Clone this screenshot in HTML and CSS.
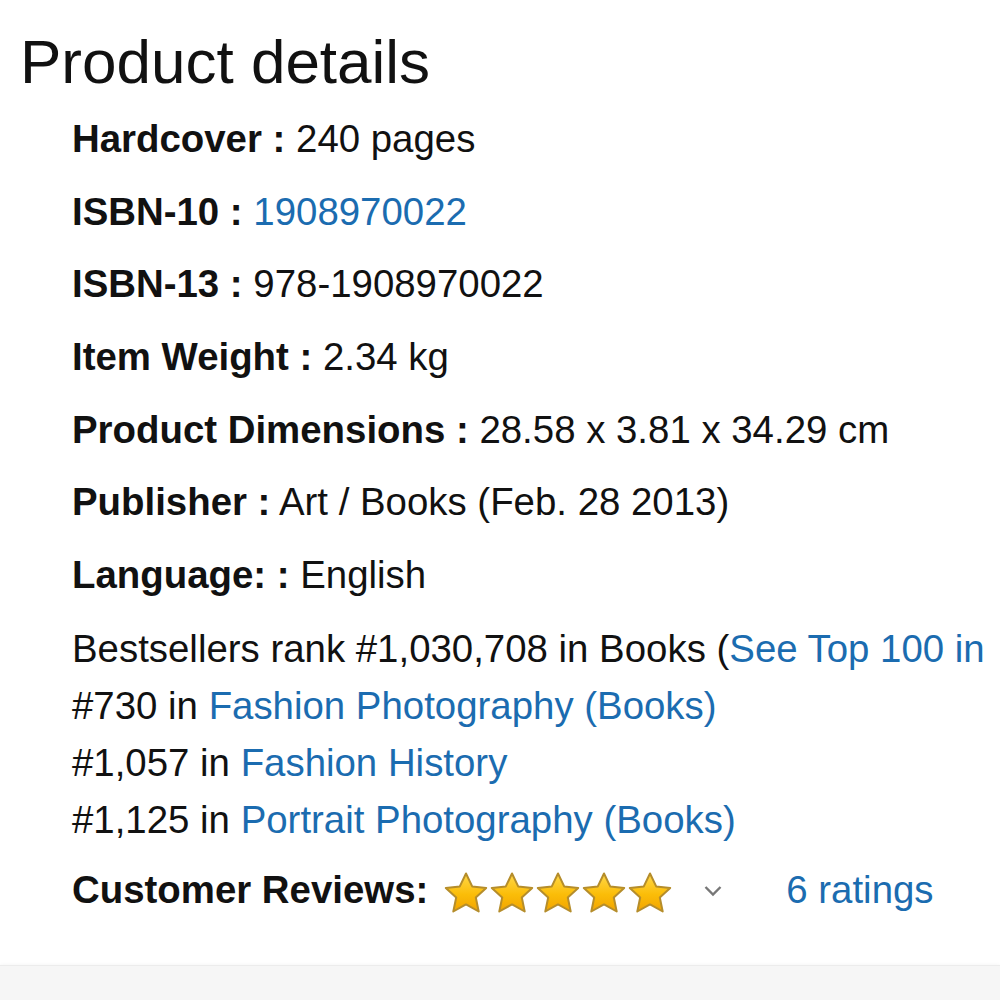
FILE: index.html
```html
<!DOCTYPE html>
<html lang="en">
<head>
<meta charset="utf-8">
<title>Product details</title>
<link rel="stylesheet" href="styles.css">
</head>
<body>
<div class="page">
  <h1 class="title">Product details</h1>
  <ul class="details">
    <li><b>Hardcover :</b> 240 pages</li>
    <li><b>ISBN-10 :</b> <a href="#">1908970022</a></li>
    <li><b>ISBN-13 :</b> 978-1908970022</li>
    <li><b>Item Weight :</b> 2.34 kg</li>
    <li><b>Product Dimensions :</b> 28.58 x 3.81 x 34.29 cm</li>
    <li><b>Publisher :</b> Art / Books (Feb. 28 2013)</li>
    <li><b>Language: :</b> English</li>
  </ul>
  <div class="ranks">
    <div class="rank-line">Bestsellers rank #1,030,708 in Books (<a href="#">See Top 100 in</a></div>
    <div class="rank-line">#730 in <a href="#">Fashion Photography (Books)</a></div>
    <div class="rank-line">#1,057 in <a href="#">Fashion History</a></div>
    <div class="rank-line">#1,125 in <a href="#">Portrait Photography (Books)</a></div>
  </div>
  <div class="reviews">
    <b>Customer Reviews:</b>
    <span class="stars">
      <svg class="star" viewBox="0 0 46 44" width="46" height="44"><defs><linearGradient id="sg" x1="0" y1="0" x2="0" y2="1"><stop offset="0" stop-color="#ffd84a"/><stop offset="0.55" stop-color="#fbbd08"/><stop offset="1" stop-color="#f2a400"/></linearGradient></defs><polygon points="23,2.5 29.2,15.4 43.2,16.9 32.8,26.5 35.7,40.5 23,33.4 10.3,40.5 13.2,26.5 2.8,16.9 16.8,15.4" fill="url(#sg)" stroke="#b58d2b" stroke-width="2" stroke-linejoin="round"/></svg>
      <svg class="star" viewBox="0 0 46 44" width="46" height="44"><polygon points="23,2.5 29.2,15.4 43.2,16.9 32.8,26.5 35.7,40.5 23,33.4 10.3,40.5 13.2,26.5 2.8,16.9 16.8,15.4" fill="url(#sg)" stroke="#b58d2b" stroke-width="2" stroke-linejoin="round"/></svg>
      <svg class="star" viewBox="0 0 46 44" width="46" height="44"><polygon points="23,2.5 29.2,15.4 43.2,16.9 32.8,26.5 35.7,40.5 23,33.4 10.3,40.5 13.2,26.5 2.8,16.9 16.8,15.4" fill="url(#sg)" stroke="#b58d2b" stroke-width="2" stroke-linejoin="round"/></svg>
      <svg class="star" viewBox="0 0 46 44" width="46" height="44"><polygon points="23,2.5 29.2,15.4 43.2,16.9 32.8,26.5 35.7,40.5 23,33.4 10.3,40.5 13.2,26.5 2.8,16.9 16.8,15.4" fill="url(#sg)" stroke="#b58d2b" stroke-width="2" stroke-linejoin="round"/></svg>
      <svg class="star" viewBox="0 0 46 44" width="46" height="44"><polygon points="23,2.5 29.2,15.4 43.2,16.9 32.8,26.5 35.7,40.5 23,33.4 10.3,40.5 13.2,26.5 2.8,16.9 16.8,15.4" fill="url(#sg)" stroke="#b58d2b" stroke-width="2" stroke-linejoin="round"/></svg>
    </span>
    <svg class="chevron" viewBox="0 0 20 12" width="20" height="12"><polyline points="2.5,2 10,9.5 17.5,2" fill="none" stroke="#777" stroke-width="2.4"/></svg>
    <a href="#" class="ratings">6 ratings</a>
  </div>
</div>
<div class="footer-band"></div>
</body>
</html>
```

FILE: styles.css
```css
html, body {
  margin: 0;
  padding: 0;
  background: #ffffff;
}
body {
  font-family: "Liberation Sans", Arial, sans-serif;
  color: #111111;
  width: 1000px;
  height: 1000px;
  overflow: hidden;
  position: relative;
}
a {
  color: #1b6cb0;
  text-decoration: none;
}
.page {
  padding-top: 26px;
}
.title {
  margin: 0 0 0 20px;
  font-size: 62px;
  font-weight: 400;
  line-height: normal;
  height: 77px;
}
.details {
  list-style: none;
  margin: 0;
  padding: 0 0 0 72px;
  font-size: 38.4px;
  line-height: 72.67px;
}
.details li {
  white-space: nowrap;
}
.details b {
  font-weight: 700;
}
.ranks {
  margin-top: 8px;
  padding-left: 72px;
  font-size: 38.4px;
  line-height: 57px;
  white-space: nowrap;
}
.reviews {
  margin-top: 6px;
  padding-left: 72px;
  font-size: 38.4px;
  line-height: 72.67px;
  height: 72.67px;
  display: flex;
  align-items: center;
  white-space: nowrap;
}
.stars {
  display: inline-flex;
  margin-left: 15px;
  margin-top: 6px;
}
.star {
  display: block;
}
.chevron {
  margin-left: 30px;
  margin-top: 2px;
}
.ratings {
  margin-left: 63px;
}
.footer-band {
  position: absolute;
  left: 0;
  right: 0;
  top: 965px;
  bottom: 0;
  background: #f6f6f6;
  border-top: 1px solid #ececec;
  box-shadow: 0 -1px 3px rgba(0,0,0,0.03);
}
```
